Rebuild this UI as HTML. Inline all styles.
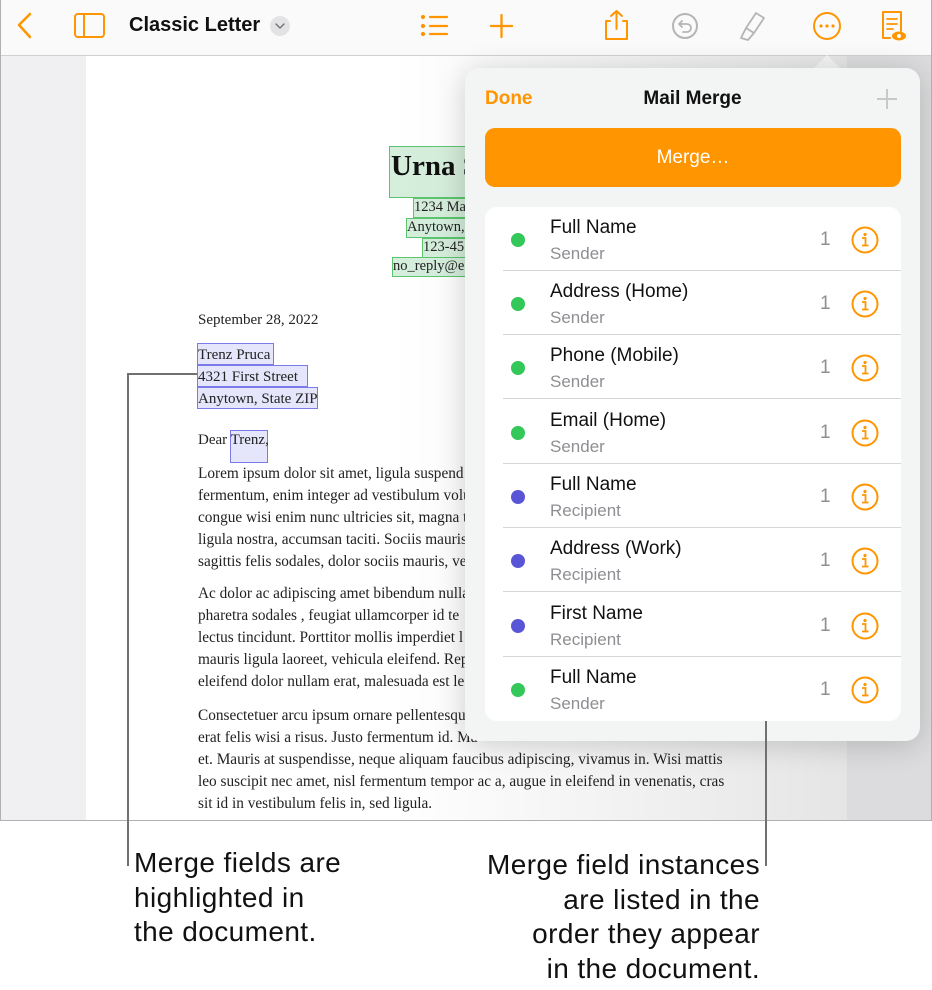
<!DOCTYPE html>
<html><head><meta charset="utf-8"><style>
*{margin:0;padding:0;box-sizing:border-box}
body{width:932px;height:990px;background:#fff;position:relative;overflow:hidden;font-family:"Liberation Sans",sans-serif}
.abs{position:absolute}
#screen{left:0;top:0;width:932px;height:821px;border:1px solid #b0b0b0;border-top:none;background:#f2f2f4;overflow:hidden}
#tb{left:0;top:0;width:932px;height:56px;background:#fafafa;border-bottom:1px solid #d0d0d0}
#page{left:85px;top:56px;width:761px;height:765px;background:#fff}
#shade{left:85px;top:56px;width:761px;height:765px;background:linear-gradient(90deg,rgba(0,0,0,0) 40%,rgba(0,0,0,0.1) 100%)}
.serif{font-family:"Liberation Serif",serif;color:#222;font-size:15px}
.p{left:197px;width:560px;line-height:22px;font-family:"Liberation Serif",serif;font-size:15.3px;color:#222;white-space:nowrap}
.gbox{position:absolute;border:1px solid #5cc46e;background:rgba(120,200,140,.3)}
.bbox{position:absolute;border:1px solid #7a7ae8;background:rgba(150,150,240,.25)}
#pop{left:464px;top:68px;width:455px;height:673px;background:#f3f4f4;border-radius:14px;box-shadow:0 4px 30px rgba(0,0,0,.18)}
.row{position:absolute;left:0;width:416px;height:64px}
.row .dot{position:absolute;left:26px;top:26px;width:14px;height:14px;border-radius:50%}
.row .t{position:absolute;left:65px;top:10px;font-size:19px;color:#111}
.row .s{position:absolute;left:65px;top:37px;font-size:17px;color:#8e8e93}
.row .n{position:absolute;left:335px;top:22px;font-size:19px;color:#8e8e93}
.row .i{position:absolute;left:366px;top:19px}
.row .sep{position:absolute;left:18px;right:0;bottom:0;height:1px;background:#d6d6d6}
.cap{font-size:28px;letter-spacing:0.4px;line-height:34.5px;color:#111;white-space:nowrap}
</style></head><body>
<div id="screen" class="abs">
<div id="page" class="abs"></div>
<div class="abs" style="left:0;top:56px;width:85px;height:765px;background:#f0f0f2"></div>
<div class="abs" style="left:846px;top:56px;width:86px;height:765px;background:#dcdcde"></div>
<div id="shade" class="abs"></div>

<div class="gbox" style="left:388px;top:146px;width:90px;height:52px"></div>
<div class="abs serif" style="left:390px;top:150px;font-size:29px;font-weight:bold;color:#111">Urna S</div>
<div class="gbox" style="left:412px;top:198px;width:60px;height:20px"></div>
<div class="abs serif" style="left:413px;top:199px;font-size:14.5px">1234 Ma</div>
<div class="gbox" style="left:405px;top:218px;width:67px;height:20px"></div>
<div class="abs serif" style="left:406px;top:219px;font-size:14.5px">Anytown,</div>
<div class="gbox" style="left:421px;top:238px;width:51px;height:20px"></div>
<div class="abs serif" style="left:422px;top:239px;font-size:14.5px">123-45</div>
<div class="gbox" style="left:391px;top:257px;width:81px;height:20px"></div>
<div class="abs serif" style="left:392px;top:258px;font-size:14.5px">no_reply@e</div>

<div class="abs serif" style="left:197px;top:312px">September 28, 2022</div>
<div class="bbox" style="left:196px;top:343px;width:77px;height:22px"></div>
<div class="bbox" style="left:196px;top:365px;width:111px;height:22px"></div>
<div class="bbox" style="left:196px;top:387px;width:121px;height:22px"></div>
<div class="abs serif" style="left:197px;top:344px;line-height:22px">Trenz Pruca<br>4321 First Street<br>Anytown, State ZIP</div>
<div class="bbox" style="left:229px;top:430px;width:38px;height:33px"></div>
<div class="abs serif" style="left:197px;top:432px">Dear Trenz,</div>

<div class="abs p" style="top:463px">Lorem ipsum dolor sit amet, ligula suspend<br>fermentum, enim integer ad vestibulum volu<br>congue wisi enim nunc ultricies sit, magna t<br>ligula nostra, accumsan taciti. Sociis mauris<br>sagittis felis sodales, dolor sociis mauris, ve</div>
<div class="abs p" style="top:583px">Ac dolor ac adipiscing amet bibendum nulla<br>pharetra sodales , feugiat ullamcorper id te<br>lectus tincidunt. Porttitor mollis imperdiet l<br>mauris ligula laoreet, vehicula eleifend. Rep<br>eleifend dolor nullam erat, malesuada est le</div>
<div class="abs p" style="top:705px">Consectetuer arcu ipsum ornare pellentesque<br>erat felis wisi a risus. Justo fermentum id. Ma<br>et. Mauris at suspendisse, neque aliquam faucibus adipiscing, vivamus in. Wisi mattis<br>leo suscipit nec amet, nisl fermentum tempor ac a, augue in eleifend in venenatis, cras<br>sit id in vestibulum felis in, sed ligula.</div>

<div id="tb" class="abs">
<svg class="abs" style="left:0;top:0" width="932" height="56" fill="none" stroke-linecap="round" stroke-linejoin="round">
<path d="M29 14 L18 25 L29 37" stroke="#ff9500" stroke-width="2.5"/>
<rect x="74" y="14" width="29" height="23" rx="3" stroke="#ff9500" stroke-width="2"/>
<line x1="83" y1="14" x2="83" y2="37" stroke="#ff9500" stroke-width="2"/>
<circle cx="279" cy="26" r="10" fill="#e3e3e6" stroke="none"/>
<path d="M275 24 L279 28 L283 24" stroke="#777" stroke-width="1.5"/>
<g stroke="#ff9500" stroke-width="2.2"><line x1="429" y1="17" x2="446" y2="17"/><line x1="429" y1="26" x2="446" y2="26"/><line x1="429" y1="34" x2="446" y2="34"/><circle cx="422" cy="17" r="1" fill="#ff9500"/><circle cx="422" cy="26" r="1" fill="#ff9500"/><circle cx="422" cy="34" r="1" fill="#ff9500"/></g>
<path d="M490 26 H511 M500.5 15 V37" stroke="#ff9500" stroke-width="2.3"/>
<path d="M609 21 H605 V39 H626 V21 H622 M615.5 29 V11 M610 16 L615.5 11 L621 16" stroke="#ff9500" stroke-width="2"/>
<circle cx="684" cy="26" r="12" stroke="#b5b5b5" stroke-width="2"/>
<path d="M681 21 L678 24 L681 27 M678 24 H686 A4 4 0 0 1 686 32 H682" stroke="#b5b5b5" stroke-width="1.8"/>
<path d="M755 13 L763 18 L753 33 L745 28 Z M745 28 L740 38 L747 40 L753 33" stroke="#b5b5b5" stroke-width="1.8"/>
<circle cx="826" cy="26" r="13" stroke="#ff9500" stroke-width="2"/>
<circle cx="820" cy="26" r="1.6" fill="#ff9500"/><circle cx="826" cy="26" r="1.6" fill="#ff9500"/><circle cx="832" cy="26" r="1.6" fill="#ff9500"/>
<path d="M889 38 H882 V12 H900 V31" stroke="#ff9500" stroke-width="2"/>
<path d="M886 19 H896 M886 24 H896 M886 29 H892" stroke="#ff9500" stroke-width="1.8"/>
<ellipse cx="898" cy="36" rx="7" ry="4.5" fill="#ff9500" stroke="none"/><circle cx="898" cy="36" r="2" fill="#fff"/>
</svg>
<div class="abs" style="left:128px;top:14px;font-size:20px;font-weight:bold;color:#111">Classic Letter</div>
</div>

<svg class="abs" style="left:812px;top:55px" width="28" height="15"><path d="M0 14 L14 0 L28 14 Z" fill="#f3f4f4"/></svg>
<div id="pop" class="abs">
<div class="abs" style="left:20px;top:20px;font-size:19px;font-weight:bold;color:#ff9500">Done</div>
<div class="abs" style="left:0;width:455px;top:20px;text-align:center;font-size:19px;font-weight:bold;color:#111">Mail Merge</div>
<svg class="abs" style="left:411px;top:20px" width="22" height="22"><path d="M11 1 V21 M1 11 H21" stroke="#c8c8c8" stroke-width="2"/></svg>
<div class="abs" style="left:20px;top:60px;width:416px;height:59px;background:#ff9500;border-radius:10px;color:#fff;font-size:19px;text-align:center;line-height:59px">Merge…</div>
<div class="abs" style="left:20px;top:139px;width:416px;height:514px;background:#fff;border-radius:12px;overflow:hidden">
 <div class="row" style="top:0"><div class="dot" style="background:#34c759"></div><div class="t">Full Name</div><div class="s">Sender</div><div class="n">1</div><svg class="i" width="28" height="28"><circle cx="14" cy="14" r="12.5" fill="none" stroke="#ff9500" stroke-width="2"/><circle cx="14" cy="8.5" r="1.6" fill="#ff9500"/><path d="M11 12 H14.5 V19.5 M11 19.5 H17.5" stroke="#ff9500" stroke-width="1.8" fill="none"/></svg><div class="sep"></div></div>
 <div class="row" style="top:64px"><div class="dot" style="background:#34c759"></div><div class="t">Address (Home)</div><div class="s">Sender</div><div class="n">1</div><svg class="i" width="28" height="28"><circle cx="14" cy="14" r="12.5" fill="none" stroke="#ff9500" stroke-width="2"/><circle cx="14" cy="8.5" r="1.6" fill="#ff9500"/><path d="M11 12 H14.5 V19.5 M11 19.5 H17.5" stroke="#ff9500" stroke-width="1.8" fill="none"/></svg><div class="sep"></div></div>
 <div class="row" style="top:128px"><div class="dot" style="background:#34c759"></div><div class="t">Phone (Mobile)</div><div class="s">Sender</div><div class="n">1</div><svg class="i" width="28" height="28"><circle cx="14" cy="14" r="12.5" fill="none" stroke="#ff9500" stroke-width="2"/><circle cx="14" cy="8.5" r="1.6" fill="#ff9500"/><path d="M11 12 H14.5 V19.5 M11 19.5 H17.5" stroke="#ff9500" stroke-width="1.8" fill="none"/></svg><div class="sep"></div></div>
 <div class="row" style="top:193px"><div class="dot" style="background:#34c759"></div><div class="t">Email (Home)</div><div class="s">Sender</div><div class="n">1</div><svg class="i" width="28" height="28"><circle cx="14" cy="14" r="12.5" fill="none" stroke="#ff9500" stroke-width="2"/><circle cx="14" cy="8.5" r="1.6" fill="#ff9500"/><path d="M11 12 H14.5 V19.5 M11 19.5 H17.5" stroke="#ff9500" stroke-width="1.8" fill="none"/></svg><div class="sep"></div></div>
 <div class="row" style="top:257px"><div class="dot" style="background:#5856d6"></div><div class="t">Full Name</div><div class="s">Recipient</div><div class="n">1</div><svg class="i" width="28" height="28"><circle cx="14" cy="14" r="12.5" fill="none" stroke="#ff9500" stroke-width="2"/><circle cx="14" cy="8.5" r="1.6" fill="#ff9500"/><path d="M11 12 H14.5 V19.5 M11 19.5 H17.5" stroke="#ff9500" stroke-width="1.8" fill="none"/></svg><div class="sep"></div></div>
 <div class="row" style="top:321px"><div class="dot" style="background:#5856d6"></div><div class="t">Address (Work)</div><div class="s">Recipient</div><div class="n">1</div><svg class="i" width="28" height="28"><circle cx="14" cy="14" r="12.5" fill="none" stroke="#ff9500" stroke-width="2"/><circle cx="14" cy="8.5" r="1.6" fill="#ff9500"/><path d="M11 12 H14.5 V19.5 M11 19.5 H17.5" stroke="#ff9500" stroke-width="1.8" fill="none"/></svg><div class="sep"></div></div>
 <div class="row" style="top:386px"><div class="dot" style="background:#5856d6"></div><div class="t">First Name</div><div class="s">Recipient</div><div class="n">1</div><svg class="i" width="28" height="28"><circle cx="14" cy="14" r="12.5" fill="none" stroke="#ff9500" stroke-width="2"/><circle cx="14" cy="8.5" r="1.6" fill="#ff9500"/><path d="M11 12 H14.5 V19.5 M11 19.5 H17.5" stroke="#ff9500" stroke-width="1.8" fill="none"/></svg><div class="sep"></div></div>
 <div class="row" style="top:450px"><div class="dot" style="background:#34c759"></div><div class="t">Full Name</div><div class="s">Sender</div><div class="n">1</div><svg class="i" width="28" height="28"><circle cx="14" cy="14" r="12.5" fill="none" stroke="#ff9500" stroke-width="2"/><circle cx="14" cy="8.5" r="1.6" fill="#ff9500"/><path d="M11 12 H14.5 V19.5 M11 19.5 H17.5" stroke="#ff9500" stroke-width="1.8" fill="none"/></svg></div>
</div>
</div>
</div>

<div class="abs" style="left:127px;top:373px;width:2px;height:493px;background:#707070"></div>
<div class="abs" style="left:127px;top:373px;width:70px;height:2px;background:#707070"></div>
<div class="abs" style="left:765px;top:721px;width:2px;height:145px;background:#707070"></div>
<div class="abs cap" style="left:134px;top:846px">Merge fields are<br>highlighted in<br>the document.</div>
<div class="abs cap" style="left:400px;width:360px;top:848px;text-align:right">Merge field instances<br>are listed in the<br>order they appear<br>in the document.</div>
</body></html>
